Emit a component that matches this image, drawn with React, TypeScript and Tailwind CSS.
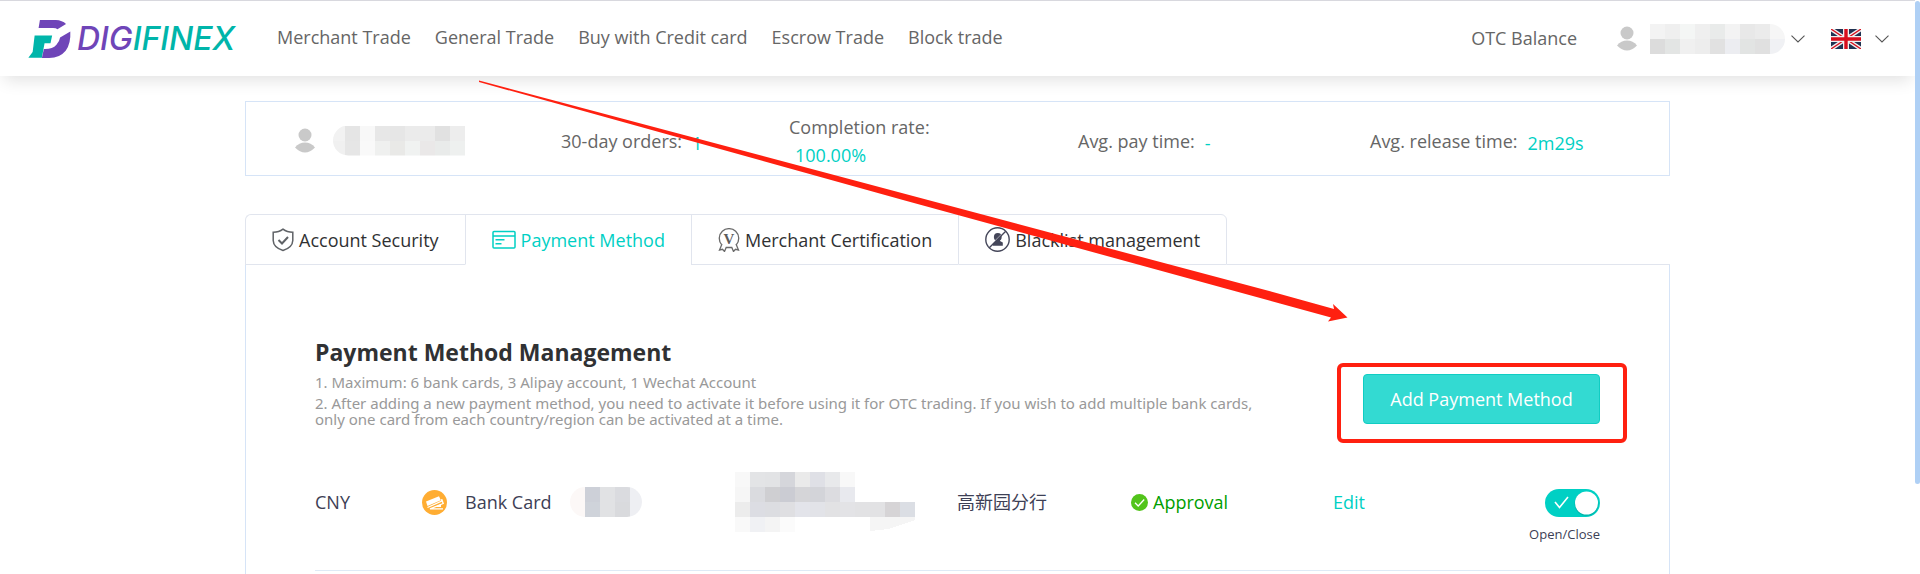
import { useState } from 'react'
import clsx from 'clsx'

const NAV_LINKS = ['Merchant Trade', 'General Trade', 'Buy with Credit card', 'Escrow Trade', 'Block trade']

const CELL = 15

// masked values, one colour per cell
const HEADER_MASK = [
    ['#f3f3f3', '#efefef', '#f4f6f5', '#efefef', '#e9ebea', '#f3f3f3', '#e8e8e8', '#ebebeb', '#f6f6f6'],
    ['#dcdcdc', '#e3e5e4', '#f0f0f0', '#ededed', '#e1e1e1', '#ecedf1', '#e2e4e3', '#e0e0e0', '#f0f1f4'],
]
const PROFILE_MASK = [
    ['#f2f2f2', '#e5e5e5', '#f8f8f8', '#e7e7e7', '#e6e6e6', '#ebebeb', '#ebebeb', '#e1e1e1', '#ededed'],
    ['#f0f0f0', '#e6e6e6', '#f9f9f9', '#eff0ef', '#e9e9e7', '#f0f2f1', '#eae8e8', '#e9ebea', '#eef0ef'],
]
const NAME_MASK = [
    ['#fcf8f7', '#cdd0d8', '#e1e2e4', '#dadbdf', '#eeeff3'],
    ['#fcf8f7', '#cfd3da', '#e1e2e4', '#d9dadd', '#eeeff3'],
]
const ACCOUNT_MASK = [
    ['#f8f8f8', '#e3e4e6', '#e2e3e5', '#d5d6db', '#eaeaea', '#dfe0e6', '#e8e9eb', '#f8f8f8'],
    ['#f6f6f6', '#dadbdf', '#cfcfd2', '#cbccd3', '#d5d5d8', '#d3d4d9', '#dcdce0', '#e8e9ee'],
    ['#ececec', '#dcdde3', '#dcdde1', '#dfdfe2', '#e3e4ea', '#e2e3e8', '#e2e2e4', '#e3e3e6', '#e2e2e4', '#e2e2e4', '#d6d4d6', '#dbdee4'],
    ['#f9f9f9', '#f0f1f4', '#f4f4f4', '#fbfbfb'],
]

function Mask({ rows, className }: { rows: string[][]; className?: string }) {
    const cols = Math.max(...rows.map((row) => row.length))
    return (
        <svg
            width={cols * CELL}
            height={rows.length * CELL}
            className={clsx('shrink-0', className)}
            shapeRendering="crispEdges"
            aria-hidden="true"
        >
            {rows.map((row, y) =>
                row.map((fill, x) => (
                    <rect key={`${x}-${y}`} x={x * CELL} y={y * CELL} width={CELL} height={CELL} fill={fill} />
                ))
            )}
            {rows === ACCOUNT_MASK && <path d="M135 45h45v3l-12 4-14 5-19 2z" fill="#f5f5f5" />}
        </svg>
    )
}

function Logo() {
    return (
        <a href="#" className="flex items-center gap-1.5">
            <svg width="43" height="38" viewBox="84 63 130 115" aria-hidden="true">
                <path d="M120 63H168Q188 64 199 75L173 91Q169 87 160 87H116Z" fill="#6f45b8" />
                <path d="M104 110H157L152 133H134L126 177H85L98 160Z" fill="#00b5aa" />
                <path d="M212 98Q214 135 198 156Q180 178 148 178H126L132 151Q158 152 170 138Q180 126 181 116Z" fill="#6f45b8" />
            </svg>
            <span className="font-['Inter',sans-serif] text-[32px] leading-8 font-medium italic text-[#00b5aa]">
                <span className="text-[#6f45b8]">DIG</span>IFINEX
            </span>
        </a>
    )
}

function UserIcon() {
    return (
        <svg width="20" height="25" viewBox="0 0 20 25" fill="#c9c9c9" className="shrink-0" aria-hidden="true">
            <circle cx="10" cy="7" r="6.5" />
            <path d="M0 19.5Q4 14.5 10 14.5T20 19.5Q15 24.5 10 24.5T0 19.5Z" />
        </svg>
    )
}

function Chevron() {
    return (
        <svg width="14" height="8" viewBox="0 0 14 8" fill="none" stroke="#555" strokeWidth="1.1" aria-hidden="true">
            <path d="M0.500 0.700L7 7L13.500 0.700" />
        </svg>
    )
}

function FlagIcon() {
    return (
        <svg width="30" height="20" viewBox="0 0 30 20" aria-hidden="true">
            <rect width="30" height="20" fill="#203252" />
            <path d="M0 0L30 20M30 0L0 20" stroke="#f0f0f0" strokeWidth="4" />
            <path d="M0 0L30 20M30 0L0 20" stroke="#d80d1c" strokeWidth="1.3" />
            <path d="M15 0V20M0 10H30" stroke="#f0f0f0" strokeWidth="6" />
            <path d="M15 0V20M0 10H30" stroke="#d80d1c" strokeWidth="3.4" />
        </svg>
    )
}

function ShieldIcon() {
    return (
        <svg width="22" height="24" viewBox="0 0 22 24" fill="none" stroke="#5f6266" strokeWidth="1.5" aria-hidden="true">
            <path d="M11 1.2Q7 4.3 1.2 4.3V12.5Q1.5 19.5 11 22.5Q20.5 19.5 20.8 12.5V4.3Q15 4.3 11 1.2Z" />
            <path d="M6.5 12l3.5 3.5 6-6.5" strokeWidth="2" />
        </svg>
    )
}

function CardIcon() {
    return (
        <svg width="24" height="20" viewBox="0 0 24 20" fill="none" stroke="currentColor" strokeWidth="1.5" aria-hidden="true">
            <rect x="1" y="1.5" width="22" height="16.5" rx="1" />
            <path d="M1 6H23M3.500 9.800H12.500M3.500 13.800H9.500" />
        </svg>
    )
}

function MedalIcon() {
    return (
        <svg width="22" height="24" viewBox="0 0 22 24" fill="none" stroke="#6a6a6a" strokeWidth="1.3" aria-hidden="true">
            <path d="M3.600 16.600A9.700 9.700 0 1 1 18.400 16.600" />
            <path d="M4 16L1.500 22L4.500 21.300L6.500 23.500L8.200 19.500H13.800L15.500 23.500L17.500 21.300L20.500 22L18 16" />
            <text x="11" y="15.5" textAnchor="middle" fontSize="15" fontWeight="700" fontFamily="Liberation Serif, serif" fill="#5c5c5c" stroke="none">
                V
            </text>
        </svg>
    )
}

function BlacklistIcon() {
    return (
        <svg width="25" height="25" viewBox="0 0 25 25" aria-hidden="true">
            <circle cx="12.5" cy="12.5" r="11.7" fill="none" stroke="#444659" strokeWidth="1.4" />
            <circle cx="12.8" cy="10" r="3.9" fill="#444659" />
            <path d="M10.500 12H15V14L17.800 15.500V18.700H7.800V16.500L10.500 14Z" fill="#444659" />
            <path d="M3.900 19.900L19.900 3.900" stroke="#fff" strokeWidth="0.8" />
            <path d="M4.300 20.700L20.700 4.300" stroke="#444659" strokeWidth="1.3" />
        </svg>
    )
}

function BankIcon() {
    return (
        <svg width="25" height="25" viewBox="0 0 25 25" className="shrink-0" aria-hidden="true">
            <circle cx="12.5" cy="12.5" r="12.5" fill="#ffad33" />
            <path d="M4 11.500L17 6.300L18.800 10.300L5.500 16Z" fill="#fff" />
            <path d="M5.500 17.500L19.700 11.200V9.300L21.200 13.500L8 18.800H21" fill="none" stroke="#fff" strokeWidth="1.3" />
            <path d="M12 17L19 14V17Z" fill="#fff" />
        </svg>
    )
}

function ApprovedIcon() {
    return (
        <svg width="17" height="17" viewBox="0 0 17 17" aria-hidden="true">
            <circle cx="8.5" cy="8.5" r="8.5" fill="#52c41a" />
            <path d="M4 8.800L7.200 12L13.200 5.500" fill="none" stroke="#fff" strokeWidth="1.3" />
        </svg>
    )
}

function Header() {
    return (
        <header className="flex h-19 items-center border-t border-[#d8d8de] bg-white pr-[26px] pl-7 shadow-[0_8px_16px_-4px_rgba(0,0,0,0.12)]">
            <Logo />
            <nav className="ml-[42px] flex flex-1 gap-6 pb-1">
                {NAV_LINKS.map((link) => (
                    <a key={link} href="#">
                        {link}
                    </a>
                ))}
            </nav>
            <a href="#" className="pb-0.5">
                OTC Balance
            </a>
            <button type="button" aria-label="Account" className="ml-10 flex items-center">
                <UserIcon />
                <Mask rows={HEADER_MASK} className="mr-1.5 ml-[13px] rounded-r-2xl" />
                <Chevron />
            </button>
            <button type="button" aria-label="Language" className="ml-[26px] flex items-center gap-3.5">
                <FlagIcon />
                <Chevron />
            </button>
        </header>
    )
}

function Stat({ label, value }: { label: string; value: string }) {
    return (
        <div className="flex items-center gap-2.5">
            <span>{label}</span>
            <span className="pt-1 text-[#00d0c4]">{value}</span>
        </div>
    )
}

function ProfileCard() {
    return (
        <section className="grid h-[75px] grid-cols-[266fr_228fr_289fr_292fr_250fr] items-center border border-[#d6e4f7] px-[49px] pt-1">
            <div className="flex items-center gap-[15px]">
                <UserIcon />
                <Mask rows={PROFILE_MASK} className="[clip-path:inset(0_0_0_3px_round_16px_0_0_16px)]" />
            </div>
            <Stat label="30-day orders:" value="1" />
            <div className="leading-7">
                <div>Completion rate:</div>
                <div className="pl-1.5 text-[#00d0c4]">100.00%</div>
            </div>
            <Stat label="Avg. pay time:" value="-" />
            <Stat label="Avg. release time:" value="2m29s" />
        </section>
    )
}

const TABS = [
    { name: 'Account Security', icon: <ShieldIcon /> },
    { name: 'Payment Method', icon: <CardIcon /> },
    { name: 'Merchant Certification', icon: <MedalIcon /> },
    { name: 'Blacklist management', icon: <BlacklistIcon /> },
]

function Tabs() {
    const [active, setActive] = useState('Payment Method')

    return (
        <div role="tablist" className="mt-[38px] flex">
            {TABS.map(({ name, icon }) => (
                <button
                    key={name}
                    type="button"
                    role="tab"
                    aria-selected={active === name}
                    onClick={() => setActive(name)}
                    className={clsx(
                        'flex h-[51px] items-center gap-[5px] border-t border-b border-l border-[#e1e5ee] px-[26px] first:rounded-tl-md last-of-type:rounded-tr-md last-of-type:border-r',
                        active === name ? 'border-b-white text-[#00d0c4]' : 'text-[#303133]'
                    )}
                >
                    {icon}
                    {name}
                </button>
            ))}
            <div className="flex-1 border-b border-[#e1e5ee]" />
        </div>
    )
}

function PaymentRow() {
    const [open, setOpen] = useState(true)

    return (
        <li className="grid grid-cols-[107fr_148fr_165fr_222fr_174fr_202fr_267fr] items-center border-b border-[#deeaf6] pt-7 pb-[26px] text-[#3d4055]">
            <span>CNY</span>
            <span className="flex items-center gap-[18px]">
                <BankIcon />
                Bank Card
            </span>
            <Mask rows={NAME_MASK} className="w-[72px] rounded-full" />
            <Mask rows={ACCOUNT_MASK} />
            <span>高新园分行</span>
            <span className="flex items-center gap-[5px] text-[#009e00]">
                <ApprovedIcon />
                Approval
            </span>
            <span className="flex justify-between self-stretch">
                <a href="#" className="self-center text-[#00d0c4]">
                    Edit
                </a>
                <label className="flex flex-col items-end gap-[7px] pt-[29px]">
                    <span className="relative flex h-7 w-[55px]">
                        <input
                            type="checkbox"
                            role="switch"
                            checked={open}
                            onChange={(e) => setOpen(e.target.checked)}
                            className="h-7 w-[55px] appearance-none rounded-full bg-gray-300 checked:bg-[#00d0c4]"
                        />
                        <svg viewBox="0 0 55 28" className="pointer-events-none absolute inset-0" aria-hidden="true">
                            {open && <path d="M10 13L14.500 18.500L23 8" fill="none" stroke="#fff" strokeWidth="1.6" />}
                            <circle cx={open ? 41.5 : 14} cy="15" r="12" fill="#000" opacity="0.12" />
                            <circle cx={open ? 41.5 : 14} cy="14" r="11.5" fill="#fff" />
                        </svg>
                    </span>
                    <span className="text-[13px] leading-5">Open/Close</span>
                </label>
            </span>
        </li>
    )
}

function PaymentPanel() {
    return (
        <section className="flex-1 border-x border-[#d6e4f7] px-[69px] pt-[71px]">
            <h1 className="text-[23px] leading-8 font-bold text-[#303133]">Payment Method Management</h1>
            <div className="mt-1.5 flex items-start justify-between">
                <div className="max-w-[965px] space-y-[5px] font-['Noto_Sans',sans-serif] text-[15px] leading-4 text-[#999]">
                    <p>1. Maximum: 6 bank cards, 3 Alipay account, 1 Wechat Account</p>
                    <p>
                        2. After adding a new payment method, you need to activate it before using it for OTC trading. If you
                        wish to add multiple bank cards, only one card from each country/region can be activated at a time.
                    </p>
                </div>
                <div className="relative">
                    <button
                        type="button"
                        className="h-[50px] w-[237px] rounded-sm border border-[#10cdc3] bg-[#33dad2] text-white"
                    >
                        Add Payment Method
                    </button>
                    <div className="pointer-events-none absolute -top-[11px] -right-[27px] -bottom-[19px] -left-[26px] rounded-md border-4 border-[#ff2010]" />
                </div>
            </div>
            <ul className="mt-[5px]">
                <PaymentRow />
            </ul>
        </section>
    )
}

export default function App() {
    return (
        <div className="relative flex min-h-screen bg-white font-['Open_Sans','Noto_Sans_CJK_SC',sans-serif] text-lg leading-6 text-[#666]">
            <div className="flex flex-1 flex-col">
                <Header />
                <main className="mx-auto flex w-full max-w-[1425px] flex-1 flex-col pt-[25px]">
                    <ProfileCard />
                    <Tabs />
                    <PaymentPanel />
                </main>
            </div>

            {/* scrollbar thumb */}
            <div className="mt-px h-[483px] w-[5px] rounded-full bg-[#afd0f5]" />

            {/* pointer to the add button */}
            <svg
                width="870"
                height="242"
                viewBox="478 80 870 242"
                className="pointer-events-none absolute top-20 left-[478px]"
                aria-hidden="true"
            >
                <path d="M479 80.500L928 200L1280 294L1334 309L1333 304L1347.500 317.500L1328 321.500L1331 317.500L1280 303.500L903 200L479 82Z" fill="#ff2010" />
            </svg>
        </div>
    )
}
